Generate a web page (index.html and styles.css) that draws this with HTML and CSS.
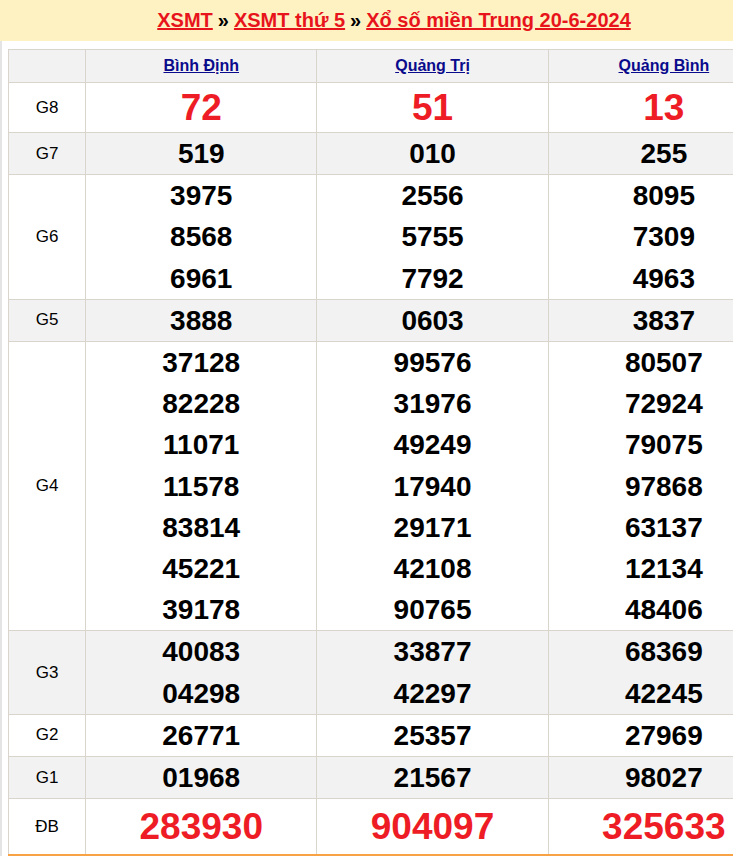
FILE: index.html
```html
<!DOCTYPE html>
<html lang="vi">
<head>
<meta charset="utf-8">
<title>XSMT 20-6-2024</title>
<link rel="stylesheet" href="styles.css">
</head>
<body>
<div class="page">
  <div class="top">
    <a class="crumb" href="#">XSMT</a><span class="sep">»</span><a class="crumb" href="#">XSMT thứ 5</a><span class="sep">»</span><a class="crumb" href="#">Xổ số miền Trung 20-6-2024</a>
  </div>
  <div class="content">
    <table class="kq">
      <colgroup><col class="c-label"><col class="c-prov"><col class="c-prov"><col class="c-prov"></colgroup>
      <tr class="head gray">
        <td></td>
        <td><a href="#">Bình Định</a></td>
        <td><a href="#">Quảng Trị</a></td>
        <td><a href="#">Quảng Bình</a></td>
      </tr>
      <tr class="g8">
        <td class="lbl">G8</td>
        <td><div class="big">72</div></td>
        <td><div class="big">51</div></td>
        <td><div class="big">13</div></td>
      </tr>
      <tr class="gray">
        <td class="lbl">G7</td>
        <td><div class="n">519</div></td>
        <td><div class="n">010</div></td>
        <td><div class="n">255</div></td>
      </tr>
      <tr>
        <td class="lbl">G6</td>
        <td><div class="n">3975</div><div class="n">8568</div><div class="n">6961</div></td>
        <td><div class="n">2556</div><div class="n">5755</div><div class="n">7792</div></td>
        <td><div class="n">8095</div><div class="n">7309</div><div class="n">4963</div></td>
      </tr>
      <tr class="gray">
        <td class="lbl">G5</td>
        <td><div class="n">3888</div></td>
        <td><div class="n">0603</div></td>
        <td><div class="n">3837</div></td>
      </tr>
      <tr>
        <td class="lbl">G4</td>
        <td><div class="n">37128</div><div class="n">82228</div><div class="n">11071</div><div class="n">11578</div><div class="n">83814</div><div class="n">45221</div><div class="n">39178</div></td>
        <td><div class="n">99576</div><div class="n">31976</div><div class="n">49249</div><div class="n">17940</div><div class="n">29171</div><div class="n">42108</div><div class="n">90765</div></td>
        <td><div class="n">80507</div><div class="n">72924</div><div class="n">79075</div><div class="n">97868</div><div class="n">63137</div><div class="n">12134</div><div class="n">48406</div></td>
      </tr>
      <tr class="gray">
        <td class="lbl">G3</td>
        <td><div class="n">40083</div><div class="n">04298</div></td>
        <td><div class="n">33877</div><div class="n">42297</div></td>
        <td><div class="n">68369</div><div class="n">42245</div></td>
      </tr>
      <tr>
        <td class="lbl">G2</td>
        <td><div class="n">26771</div></td>
        <td><div class="n">25357</div></td>
        <td><div class="n">27969</div></td>
      </tr>
      <tr class="gray">
        <td class="lbl">G1</td>
        <td><div class="n">01968</div></td>
        <td><div class="n">21567</div></td>
        <td><div class="n">98027</div></td>
      </tr>
      <tr class="db">
        <td class="lbl">ĐB</td>
        <td><div class="special">283930</div></td>
        <td><div class="special">904097</div></td>
        <td><div class="special">325633</div></td>
      </tr>
    </table>
  </div>
</div>
</body>
</html>
```
FILE: styles.css
```css
html, body {
  margin: 0;
  padding: 0;
  overflow: hidden;
  background: #ffffff;
}

.page {
  width: 788px;
  font-family: "Liberation Sans", Arial, sans-serif;
}

.top {
  height: 41px;
  background: #fff2c2;
  display: flex;
  align-items: center;
  justify-content: center;
  font-weight: bold;
  font-size: 20px;
}

.crumb {
  color: #e8141c;
  text-decoration: underline;
}

.sep {
  color: #000;
  margin: 0 5px;
}

.content {
  border-left: 2px solid #e4e4e4;
  padding: 8px 8px 0 6px;
}

.kq {
  width: 772px;
  border-collapse: collapse;
  table-layout: fixed;
  border-bottom: 2px solid #f6a245;
}

.c-label { width: 77px; }
.c-prov { width: 231px; }

.kq td {
  border: 1px solid #d9d4cc;
  padding: 0;
  text-align: center;
  vertical-align: middle;
}

.kq tr.gray td {
  background: #f2f2f2;
}

.head td {
  height: 32px;
  line-height: 32px;
}

.head a {
  color: #0a0a8c;
  font-size: 16px;
  font-weight: bold;
  text-decoration: underline;
}

.lbl {
  font-size: 17px;
  color: #000;
}

.n {
  font-size: 28px;
  font-weight: bold;
  color: #000;
  line-height: 41.2px;
}

.big {
  font-size: 37px;
  font-weight: bold;
  color: #ee1c25;
  line-height: 49px;
}

.special {
  font-size: 37px;
  font-weight: bold;
  color: #ee1c25;
  line-height: 55px;
}
```
